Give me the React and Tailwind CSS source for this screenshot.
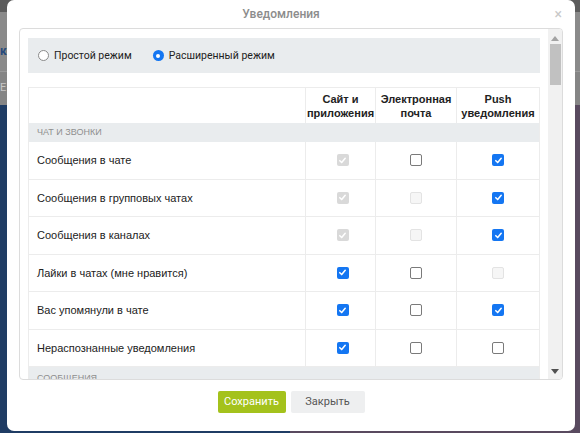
import React from 'react';

const rows = [
  { label: 'Сообщения в чате', site: 'dc', mail: 'u', push: 'c' },
  { label: 'Сообщения в групповых чатах', site: 'dc', mail: 'du', push: 'c' },
  { label: 'Сообщения в каналах', site: 'dc', mail: 'du', push: 'c' },
  { label: 'Лайки в чатах (мне нравится)', site: 'c', mail: 'u', push: 'du' },
  { label: 'Вас упомянули в чате', site: 'c', mail: 'u', push: 'c' },
  { label: 'Нераспознанные уведомления', site: 'c', mail: 'u', push: 'u' },
];

const Check = ({ state }) => {
  if (state === 'c' || state === 'dc') {
    const bg = state === 'c' ? 'bg-[#1476f2]' : 'bg-[#d9d9d9]';
    return (
      <span className={`w-[12px] h-[12px] rounded-[2px] ${bg} flex items-center justify-center`}>
        <svg width="9" height="9" viewBox="0 0 10 10">
          <path d="M2 5.2 L4.1 7.3 L8 2.6" fill="none" stroke="white" strokeWidth="1.7" strokeLinecap="round" strokeLinejoin="round" />
        </svg>
      </span>
    );
  }
  if (state === 'du') {
    return <span className="w-[12px] h-[12px] rounded-[2px] border border-[#e3e3e3] bg-[#f6f6f6]" />;
  }
  return <span className="w-[12px] h-[12px] rounded-[2px] border border-[#7a7a7a] bg-white" />;
};

const Radio = ({ checked }) =>
  checked ? (
    <span className="w-[11px] h-[11px] rounded-full bg-[#1476f2] flex items-center justify-center">
      <span className="w-[4px] h-[4px] rounded-full bg-white" />
    </span>
  ) : (
    <span className="w-[11px] h-[11px] rounded-full border border-[#8a8a8a] bg-white" />
  );

const App = () => {
  return (
    <div className="relative w-[580px] h-[433px] overflow-hidden" style={{ fontFamily: 'Roboto, sans-serif' }}>
      {/* page behind the dialog */}
      <div className="absolute inset-0 flex flex-col">
        <div className="h-[12px] bg-[#5c5c5c]" />
        <div className="h-[60px] bg-[#8a8a8a] border-b border-[#9a9a9a] text-[12px] text-[#274a7c] font-bold pt-[30px] pl-0">ко</div>
        <div className="h-[33px] bg-[#858585] text-[11px] text-[#c8c8c8] pt-[8px]">E</div>
        <div className="flex-1 grid grid-cols-2">
          <div className="bg-[#1f3c64]" />
          <div className="bg-[#594a5f]" />
        </div>
      </div>

      {/* dialog */}
      <div className="absolute left-[7px] top-0 w-[568px] h-[431px] bg-white rounded-[7px] flex flex-col">
        <div className="relative h-[28px] flex items-center justify-center pr-[20px]">
          <span className="text-[12px] font-medium text-[#8c8c8c]">Уведомления</span>
          <span className="absolute right-[13px] top-[7px] text-[14px] text-[#c8c8c8] leading-none">×</span>
        </div>

        <div className="mx-[12px] h-[352px] border border-[#dcdcdc] rounded-[4px] flex overflow-hidden">
          <div className="flex-1 px-[8px] pt-[9px] overflow-hidden">
            <div className="h-[35px] bg-[#e9ecee] flex items-center pl-[10px] text-[10.5px] text-[#222]">
              <Radio />
              <span className="ml-[5px]">Простой режим</span>
              <span className="ml-[21px]"><Radio checked /></span>
              <span className="ml-[5px]">Расширенный режим</span>
            </div>

            <div className="mt-[14px] border border-[#ececec] text-[#222]" style={{ fontFamily: '"Liberation Sans", Arial, sans-serif' }}>
              <div className="flex h-[35px] text-[11px] font-bold leading-[14px] text-center">
                <div className="w-[276px]" />
                <div className="w-[70px] border-l border-[#ececec] flex items-center justify-center">Сайт и<br />приложения</div>
                <div className="w-[81px] border-l border-[#ececec] flex items-center justify-center">Электронная<br />почта</div>
                <div className="flex-1 border-l border-[#ececec] flex items-center justify-center">Push<br />уведомления</div>
              </div>
              <div className="h-[19px] bg-[#e9ecee] flex items-center pl-[8px] text-[9px] text-[#8f8f8f] uppercase">Чат и звонки</div>
              {rows.map((r) => (
                <div key={r.label} className="flex h-[37.5px] border-b border-[#ececec] text-[11px]">
                  <div className="w-[276px] flex items-center pl-[8px]">{r.label}</div>
                  <div className="w-[70px] border-l border-[#ececec] flex items-center justify-center pl-[4px]"><Check state={r.site} /></div>
                  <div className="w-[81px] border-l border-[#ececec] flex items-center justify-center"><Check state={r.mail} /></div>
                  <div className="flex-1 border-l border-[#ececec] flex items-center justify-center"><Check state={r.push} /></div>
                </div>
              ))}
              <div className="h-[19px] bg-[#e9ecee] flex items-start pt-[5px] pl-[8px] text-[9px] text-[#8f8f8f] uppercase">Сообщения</div>
            </div>
          </div>

          {/* scrollbar */}
          <div className="w-[14px] bg-[#f1f1f1] flex flex-col items-center">
            <svg width="8" height="5" viewBox="0 0 8 5" className="mt-[7px]"><path d="M0 5 L4 0 L8 5 Z" fill="#a3a3a3" /></svg>
            <div className="mt-[3px] w-[11px] h-[41px] bg-[#c1c1c1]" />
            <div className="flex-1" />
            <svg width="8" height="5" viewBox="0 0 8 5" className="mb-[5px]"><path d="M0 0 L8 0 L4 5 Z" fill="#505050" /></svg>
          </div>
        </div>

        <div className="flex justify-center gap-[5px] mt-[11px] pl-[-1px]">
          <button className="w-[68px] h-[22px] bg-[#a4c21c] rounded-[2px] text-white text-[11px]">Сохранить</button>
          <button className="w-[74px] h-[22px] bg-[#eeeff0] rounded-[2px] text-[#555] text-[11px]">Закрыть</button>
        </div>
      </div>
    </div>
  );
};

export default App;
